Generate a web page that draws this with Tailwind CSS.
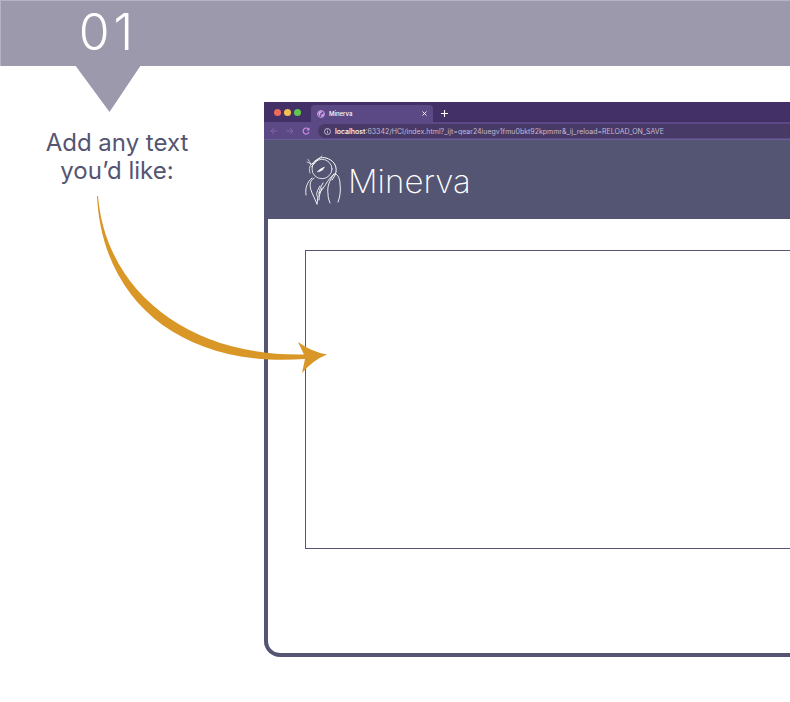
<!DOCTYPE html>
<html lang="en">
<head>
<meta charset="utf-8">
<meta name="viewport" content="width=device-width, initial-scale=1">
<title>Minerva – Step 01</title>
<script src="https://cdn.jsdelivr.net/npm/@tailwindcss/browser@4"></script>
</head>
<body class="min-h-screen overflow-x-hidden bg-white font-['Inter',sans-serif] text-[#545572]">
  <header class="relative h-[66px] border-t border-l border-[#b5b4c2] bg-[#9b99ab]">
    <h1 class="flex w-[210px] justify-center gap-1 pt-px text-[50px] leading-[60px] font-light text-white"><span>0</span><span>1</span></h1>
    <svg class="absolute top-[64px] left-[74px] h-[48px] w-[66px]" viewBox="0 0 66 48" aria-hidden="true"><path d="M0 0h66L34.500 47z" fill="#9b99ab"/></svg>
  </header>

  <main class="relative flex pt-9">
    <p class="w-[264px] shrink-0 pt-[27px] pr-[30px] text-center text-[24px] leading-7">Add any text<br>you’d like:</p>

    <section class="min-w-0 flex-1 overflow-hidden rounded-bl-[16px] border-b-4 border-[#545572] bg-[#545572]">
      <div class="flex h-5 items-end bg-[#423066]">
        <div class="flex h-5 w-[47px] items-center gap-[3px] pl-[10px]">
          <span class="size-[7px] rounded-full bg-[#ed6a5e]"></span>
          <span class="size-[7px] rounded-full bg-[#f5bf4f]"></span>
          <span class="size-[7px] rounded-full bg-[#61c554]"></span>
        </div>
        <div class="flex h-[17px] w-[122px] items-center rounded-t bg-[#5a4984] px-1.5 text-[6px] leading-none font-medium text-white">
          <svg class="mr-1 size-2" viewBox="0 0 8 8" aria-hidden="true"><circle cx="4" cy="4" r="3.400" fill="#5a4984" stroke="#d7a4ee" stroke-width="1"/><path d="M1 3l2-2 2 .5-.5 1.500-1.500.5.5 1.500-1 1zM5 4l2-.5-.5 2-1.500 1.500-1-1z" fill="#d7a4ee"/></svg>
          <span class="flex-1">Minerva</span>
          <button class="grid h-2 w-1.5 place-items-center" aria-label="Close tab"><svg class="size-[5px]" viewBox="0 0 5 5"><path d="M.5.5l4 4m0-4l-4 4" stroke="#fff" stroke-width=".9"/></svg></button>
        </div>
        <button class="ml-[7px] grid h-[17px] w-2 place-items-center" aria-label="New tab"><svg class="size-[7px]" viewBox="0 0 7 7"><path d="M3.500 0v7M0 3.500h7" stroke="#fff" stroke-width="1.100"/></svg></button>
      </div>
      <div class="flex h-[18px] items-center border-b border-[#6c5c99] bg-[#5a4984] pt-px pl-1.5">
        <div class="flex w-[48px] gap-2">
          <button aria-label="Back"><svg class="size-2" viewBox="0 0 8 8" fill="none" stroke="#8b67ad" stroke-width=".9"><path d="M7.500 4H1M4 1L1 4l3 3"/></svg></button>
          <button aria-label="Forward"><svg class="size-2" viewBox="0 0 8 8" fill="none" stroke="#8b67ad" stroke-width=".9"><path d="M.5 4H7M4 1l3 3-3 3"/></svg></button>
          <button aria-label="Reload"><svg class="size-2" viewBox="0 0 8 8" fill="none" stroke="#d08fe8" stroke-width="1.100"><path d="M6.500 2.200A3 3 0 1 0 7 5"/><path d="M7.500.5v3h-3z" fill="#d08fe8" stroke="none"/></svg></button>
        </div>
        <div class="flex h-[14px] flex-1 items-center rounded-l-full bg-[#483a66] pl-1.5 text-[7px] leading-none whitespace-nowrap text-[#c4bbd4]">
          <svg class="mr-1 size-[7px]" viewBox="0 0 7 7" fill="none" stroke="#d8d0e4" stroke-width=".8" aria-hidden="true"><circle cx="3.500" cy="3.500" r="3"/><path d="M3.500 3v2.200M3.500 1.500v.8"/></svg>
          <span><span class="font-medium text-white">localhost</span>:63342/HCI/index.html?_ijt=qear24iuegv1fmu0bkt92kpmmr&amp;_ij_reload=RELOAD_ON_SAVE</span>
        </div>
      </div>
      <div class="flex h-[79px] items-center gap-1.5 pt-0.5 pl-10 text-white">
        <svg class="h-[52px] w-[38px]" viewBox="0 0 38 52" fill="none" stroke="#fff" stroke-linecap="round" aria-hidden="true">
          <path d="M8 9C12 4 17 1.500 22 3c7 2 11 7 10 14-.5 3-2 5-4 8" stroke-width="1"/>
          <ellipse cx="18" cy="14" rx="10" ry="9.700" stroke-width=".8"/>
          <path d="M3 7l5 2.500M4 4.500L7 9c-2 3-2 6-1 9M9 9l5-4M12 6l6-5M7 12l4-4" stroke-width=".7"/>
          <path d="M13.500 16.500l3-2.500 4-2-2 3-3 1.500z" fill="#fff" stroke-width=".5"/>
          <path d="M8 23c-5 4-7 10-6 17M10 23c-5 3-5 9-1 17l4 9M14 41l-1 8" stroke-width=".9"/>
          <path d="M16 31c-3 5-4 8-3 10M19 28c-4 7-4 9-4 12M18 33c-2 5-3 8-3 12M15 38c5-4 8-13 15-19 3-1 6 4 6 10 1 7 0 13-2 18" stroke-width=".9"/>
          <path d="M30 19c-5 7-7 13-6 20 0 4 1 6 2 9" stroke-width=".9"/>
        </svg>
        <h2 class="text-[33px] leading-10 font-extralight">Minerva</h2>
      </div>
      <div class="ml-1 h-[434px] overflow-hidden rounded-bl-[12px] bg-white pt-[31px] pl-[37px]">
        <textarea aria-label="Add any text you’d like" class="block h-[299px] w-full resize-none border border-r-0 border-[#545572] bg-white p-3 text-base outline-none"></textarea>
      </div>
    </section>

    <svg class="pointer-events-none absolute top-[130px] left-[96px] h-[178px] w-[232px]" viewBox="96 196 232 178" aria-hidden="true">
      <path d="M97 196C102 300 180 368 305 359L302 373Q313 360 327 354.500Q312 352 298 342L304 354.500C190 357 106 292 98 196z" fill="#d99727"/>
    </svg>
  </main>
</body>
</html>
